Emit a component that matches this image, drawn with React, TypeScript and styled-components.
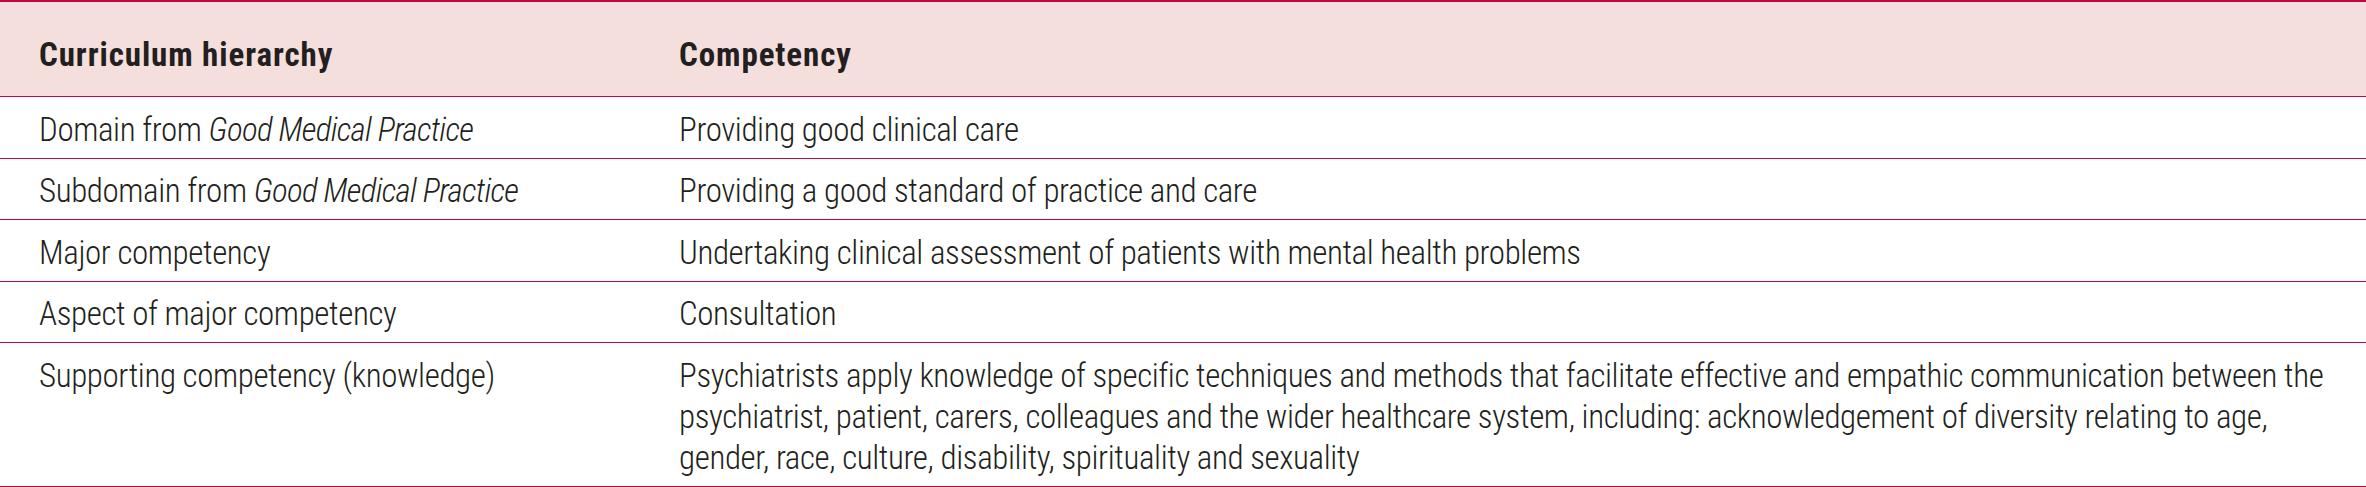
import styled, { createGlobalStyle } from "styled-components";

const GlobalStyle = createGlobalStyle`
    html, body {
        margin: 0;
        padding: 0;
        background: #ffffff;
    }
    body {
        font-family: "Roboto Condensed", "Liberation Sans", Arial, sans-serif;
        color: #231f20;
    }
`;

const Table = styled.div`
    width: 2366px;
    overflow: hidden;
    border-top: 2px solid #c2073f;
`;

const Row = styled.div<{head?: boolean}>`
    display: grid;
    grid-template-columns: 640px 1fr;
    background: ${props => props.head ? "#f5dfdd" : "#ffffff"};
    border-bottom: 1px solid #c2073f;
    padding: ${props => props.head ? "32px 0 21px" : "11.5px 0 8px"};
`;

const Cell = styled.div<{head?: boolean}>`
    padding-left: 39px;
    font-size: 33px;
    line-height: 41px;
    font-weight: ${props => props.head ? 700 : 300};
    letter-spacing: ${props => props.head ? "0.9px" : "-0.4px"};
    white-space: nowrap;
    em {
        font-style: italic;
        letter-spacing: -0.7px;
    }
`;

const rows = [
    { level: <>Domain from <em>Good Medical Practice</em></>, text: <>Providing good clinical care</> },
    { level: <>Subdomain from <em>Good Medical Practice</em></>, text: <>Providing a good standard of practice and care</> },
    { level: <>Major competency</>, text: <>Undertaking clinical assessment of patients with mental health problems</> },
    { level: <>Aspect of major competency</>, text: <>Consultation</> },
    {
        level: <>Supporting competency (knowledge)</>,
        text: <>
            Psychiatrists apply knowledge of specific techniques and methods that facilitate effective and empathic communication between the<br />
            psychiatrist, patient, carers, colleagues and the wider healthcare system, including: acknowledgement of diversity relating to age,<br />
            gender, race, culture, disability, spirituality and sexuality
        </>
    },
];

function App() {
    return <>
    <GlobalStyle />
    <Table>
        <Row head>
            <Cell head>Curriculum hierarchy</Cell>
            <Cell head>Competency</Cell>
        </Row>
        {rows.map((row, i) => (
            <Row key={i}>
                <Cell>{row.level}</Cell>
                <Cell>{row.text}</Cell>
            </Row>
        ))}
    </Table>
    </>;
}

export default App;
